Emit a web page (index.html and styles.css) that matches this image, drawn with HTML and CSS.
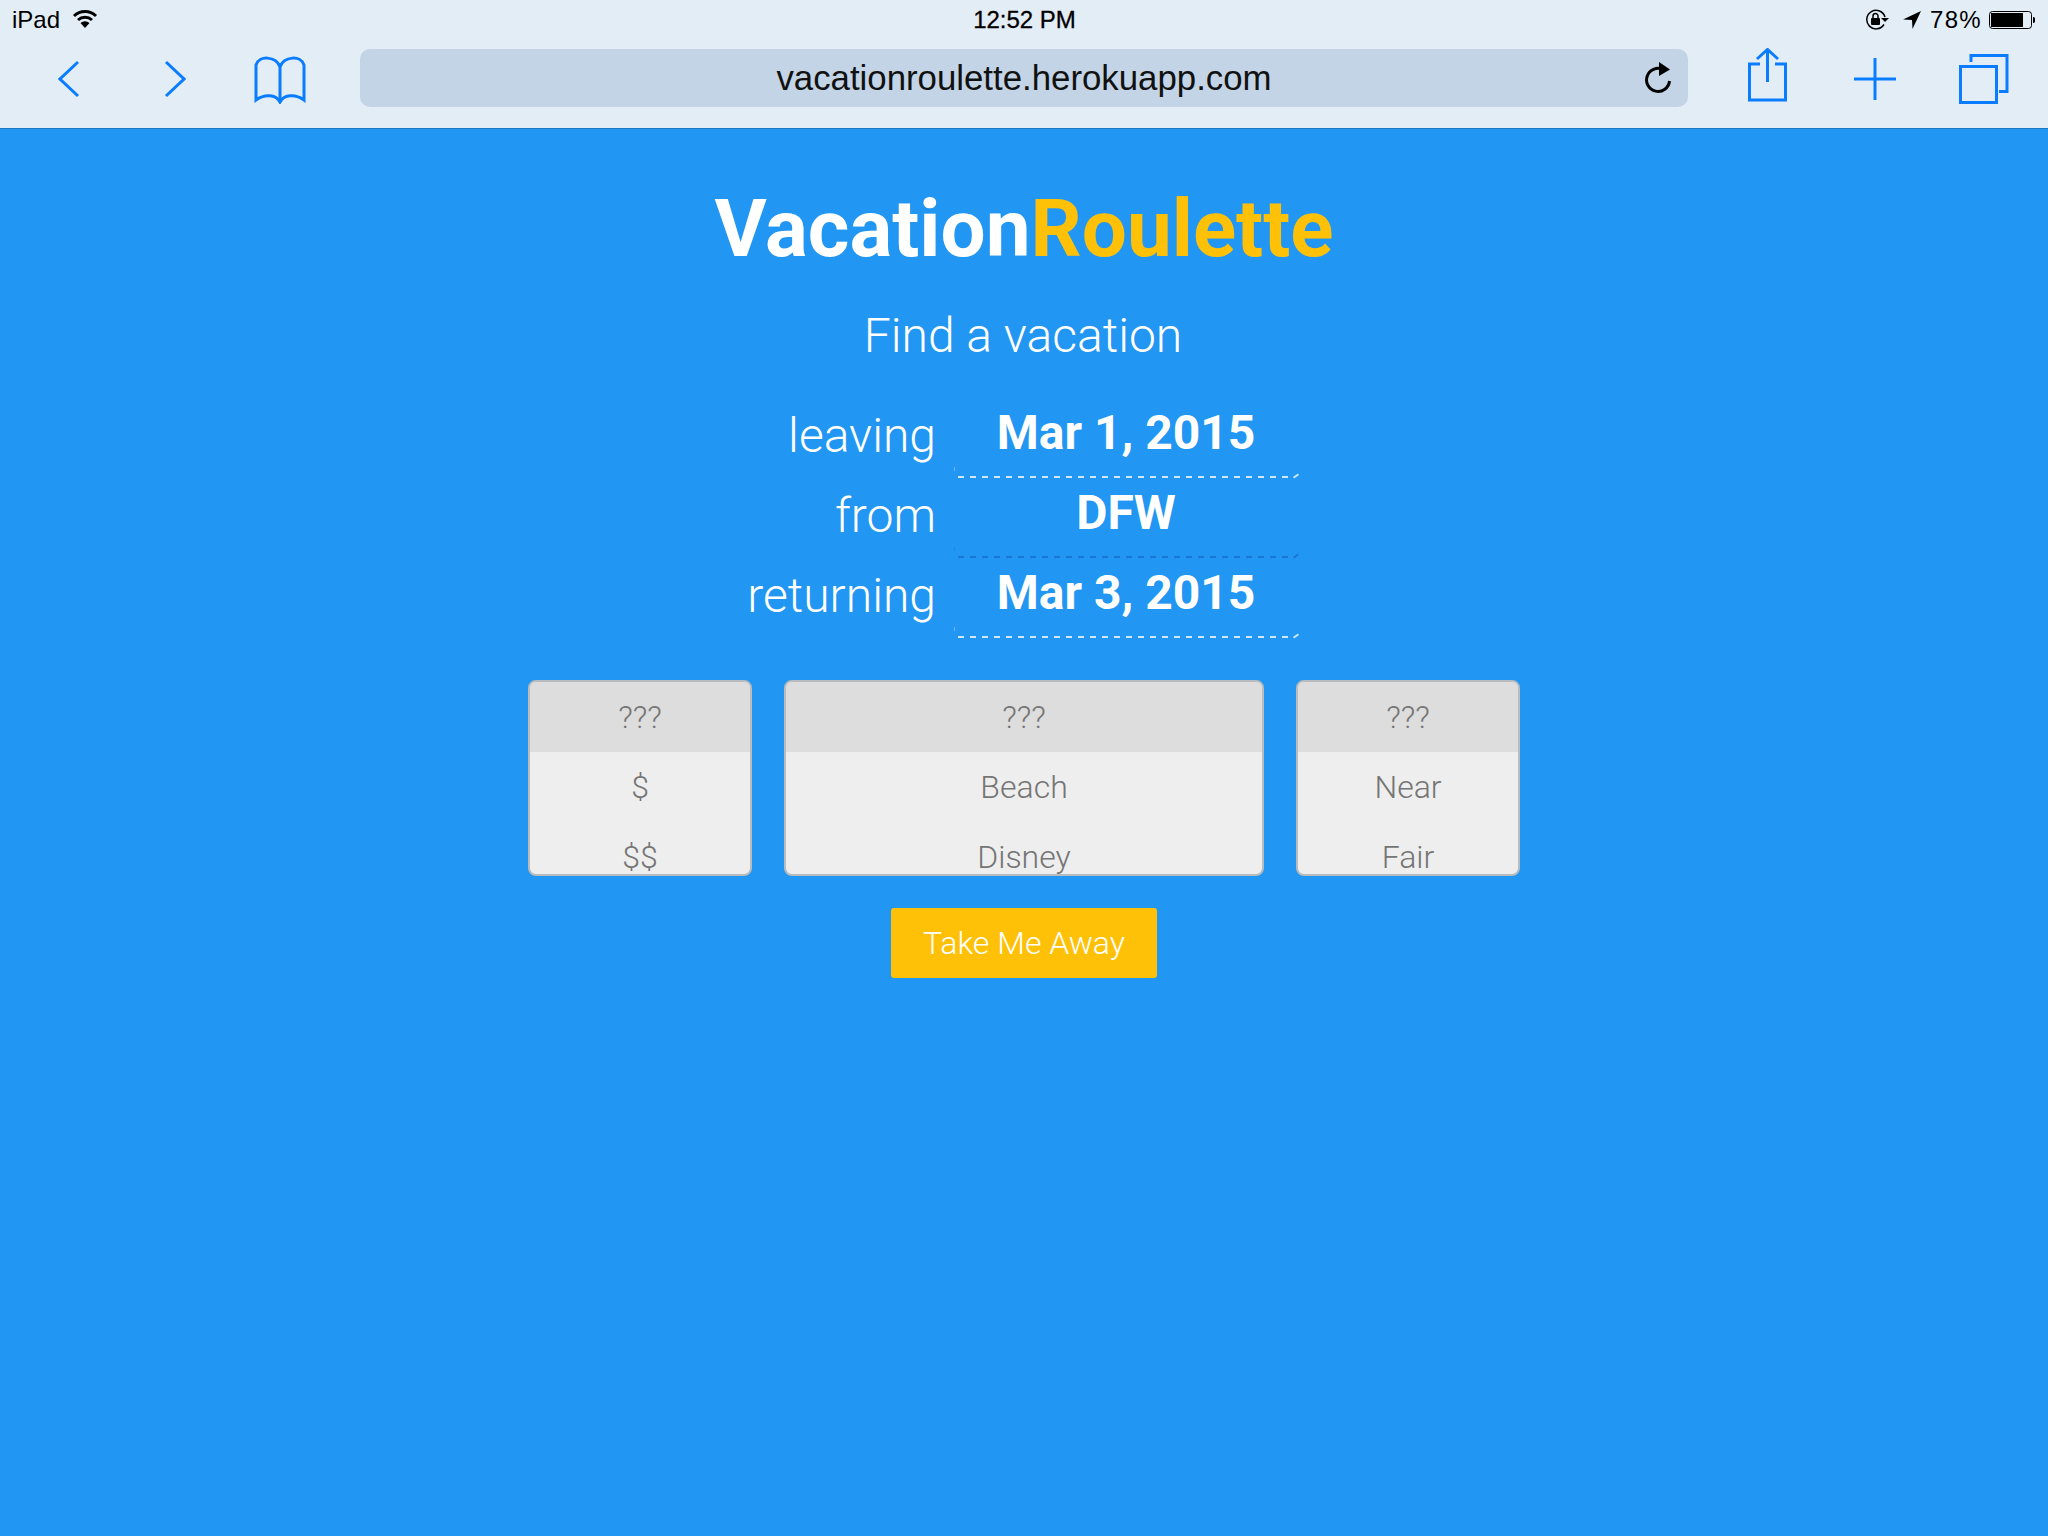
FILE: index.html
```html
<!DOCTYPE html>
<html lang="en">
<head>
<meta charset="utf-8">
<title>VacationRoulette</title>
<link rel="stylesheet" href="styles.css">
</head>
<body>
<header class="chrome">
  <div class="status">
    <div class="status-side">
      <span>iPad</span>
      <svg class="wifi" width="26" height="20" viewBox="0 0 26 20"><path d="M2 8a16 16 0 0 1 22 0M6 12a10.500 10.500 0 0 1 14 0" fill="none" stroke="#000" stroke-width="3"/><path d="M8.500 15a6.500 6.500 0 0 1 9 0L13 20z" fill="#000"/></svg>
    </div>
    <div class="status-time">12:52 PM</div>
    <div class="status-side status-right">
      <svg width="24" height="22" viewBox="0 0 24 22"><path d="M19 15.500A9.300 9.300 0 1 1 20 8" fill="none" stroke="#000" stroke-width="1.500"/><path d="M16 9h8l-4 4z" fill="#000"/><rect x="6" y="9" width="9" height="7" rx="1" fill="#000"/><path d="M8 9V7a2.500 2.500 0 0 1 5 0v2" fill="none" stroke="#000" stroke-width="1.500"/></svg>
      <svg class="loc" width="20" height="20" viewBox="0 0 20 20"><path d="M19 1 1 9.500l9 .5.500 9z" fill="#000"/></svg>
      <span class="pct">78%</span>
      <svg class="batt" width="46" height="20" viewBox="0 0 46 20"><rect x=".5" y="1.500" width="42" height="17" rx="3" fill="none" stroke="#000"/><rect x="2" y="3" width="32" height="14" fill="#000"/><path d="M44 7c2 0 2 1 2 3s0 3-2 3z" fill="#000"/></svg>
    </div>
  </div>
  <div class="toolbar">
    <div class="nav">
      <svg width="22" height="38" viewBox="0 0 22 38"><path d="M20 2 2 19l18 17" class="ic"/></svg>
      <svg width="22" height="38" viewBox="0 0 22 38"><path d="m2 2 18 17L2 36" class="ic"/></svg>
      <svg class="book" width="52" height="50" viewBox="0 0 52 50"><path d="M26 47V13C22 2 5 1 2 11v35c8-6 20-6 24 2 4-8 16-8 24-2V11C47 1 30 2 26 13" class="ic"/></svg>
    </div>
    <div class="url">
      <span class="url-text">vacationroulette.herokuapp.com</span>
      <svg class="reload" width="30" height="34" viewBox="0 0 30 34"><path d="M20 8.500A11.500 11.500 0 1 0 26.500 20" fill="none" stroke="#000" stroke-width="3"/><path d="M16 1 27 8.500 16 15z" fill="#000"/></svg>
    </div>
    <div class="actions">
      <svg width="40" height="54" viewBox="0 0 40 54"><path d="M12 16H1.500v36h36V16H27M19.500 34V2M9 11 19.500 1.500 30 11" class="ic"/></svg>
      <svg width="44" height="44" viewBox="0 0 44 44"><path d="M22 1v42M1 22h42" class="ic"/></svg>
      <svg width="50" height="50" viewBox="0 0 50 50"><rect x="1.500" y="12.500" width="36" height="36" class="ic"/><path d="M12 8V1.500h36v36h-8" class="ic"/></svg>
    </div>
  </div>
</header>
<main class="page">
  <h1 class="title">Vacation<span class="accent">Roulette</span></h1>
  <p class="lead">Find a vacation</p>
  <div class="fields">
    <div class="field"><span class="label">leaving</span><span class="value">Mar 1, 2015</span></div>
    <div class="field"><span class="label">from</span><span class="value value-active">DFW</span></div>
    <div class="field"><span class="label">returning</span><span class="value">Mar 3, 2015</span></div>
  </div>
  <div class="slots">
    <div class="slot"><div class="opt opt-top">???</div><div class="opt">$</div><div class="opt">$$</div></div>
    <div class="slot"><div class="opt opt-top">???</div><div class="opt">Beach</div><div class="opt">Disney</div></div>
    <div class="slot"><div class="opt opt-top">???</div><div class="opt">Near</div><div class="opt">Fair</div></div>
  </div>
  <button class="go">Take Me Away</button>
</main>
</body>
</html>
```
FILE: styles.css
```css
* { box-sizing: border-box; }
html, body { margin: 0; height: 100%; }
body { background: #2196f3; font-family: Roboto, sans-serif; overflow: hidden; }

.chrome { height: 129px; background: #e3edf6; border-bottom: 1px solid #1c76c4; display: flex; flex-direction: column; }
.status { height: 40px; padding: 0 11px 0 12px; display: grid; grid-template-columns: 1fr auto 1fr; align-items: center; font-family: "Liberation Sans", sans-serif; font-size: 24px; color: #000; }
.status-side { display: flex; align-items: center; gap: 12px; }
.status-time { font-size: 24px; font-weight: 400; -webkit-text-stroke: .3px #000; }
.status-right { gap: 8px; justify-content: flex-end; }
.pct { letter-spacing: 1.300px; margin-right: -3px; }
.status-right svg:first-child { margin-right: 5px; }
.wifi { margin-top: -4px; }
.batt { width: 50px; }
.toolbar { flex: 1; display: flex; align-items: center; padding: 0 0 14px 0; margin-top: 1px; }
.nav { display: flex; align-items: center; width: 360px; padding-left: 58px; gap: 84px; margin-top: 2px; }
.nav .book { margin-left: -16px; }
.ic { fill: none; stroke: #0a7cff; stroke-width: 3; }
.url { width: 1328px; height: 58px; background: #c2d4e5; border-radius: 10px; display: flex; align-items: center; justify-content: center; position: relative; font-family: "Liberation Sans", sans-serif; font-size: 34.800px; color: #111; }
.url-text { margin-top: 1px; }
.reload { position: absolute; right: 15px; top: 12px; }
.actions { flex: 1; display: flex; align-items: center; padding-left: 60px; gap: 62px; margin-top: 2px; }
.actions svg:first-child { margin-top: -8px; margin-right: 3px; }

.page { display: flex; flex-direction: column; align-items: center; color: #fff; }
.title { margin: 50px 0 0; font-size: 80px; line-height: 100px; font-weight: 700; }
.accent { color: #ffc107; }
.lead { margin: 3px 0 0; font-size: 48px; line-height: 108px; font-weight: 300; transform: translateX(-1px); }
.fields { width: 992px; margin-top: 5px; display: flex; flex-direction: column; }
.field { display: flex; height: 80px; gap: 23px; }
.label { width: 408px; text-align: right; font-size: 48px; font-weight: 300; line-height: 78px; padding-top: 2px; }
.value {
  --dash: #cfe6fb;
  position: relative;
  width: 346px; height: 83px; margin-left: -4px; padding-right: 4px;
  text-align: center; font-size: 48px; font-weight: 700; line-height: 76px;
  background: repeating-linear-gradient(90deg, var(--dash) 0 6px, transparent 6px 12px) 3px 100% / 336px 2px no-repeat;
}
.value::after { content: ""; position: absolute; right: 2px; bottom: 1px; width: 6px; height: 2px; background: var(--dash); transform: rotate(-35deg); }
.value::before { content: ""; position: absolute; left: -1px; bottom: 7px; width: 1px; height: 4px; background: var(--dash); opacity: .4; }
.value-active { --dash: #1976d2; }
.slots { display: grid; grid-template-columns: 224px 480px 224px; gap: 32px; margin-top: 45px; }
.slot { height: 196px; overflow: hidden; background: #eee; border: 2px solid #b8bcbf; border-radius: 8px; text-align: center; font-size: 32px; font-weight: 300; color: #757575; }
.opt { height: 70px; line-height: 70px; }
.opt-top { background: #ddd; }
.go { margin-top: 32px; width: 266px; height: 70px; border: 0; border-radius: 3px; background: #ffc107; color: #fff; font-family: Roboto, sans-serif; font-size: 32px; font-weight: 300; padding: 0; }
```
